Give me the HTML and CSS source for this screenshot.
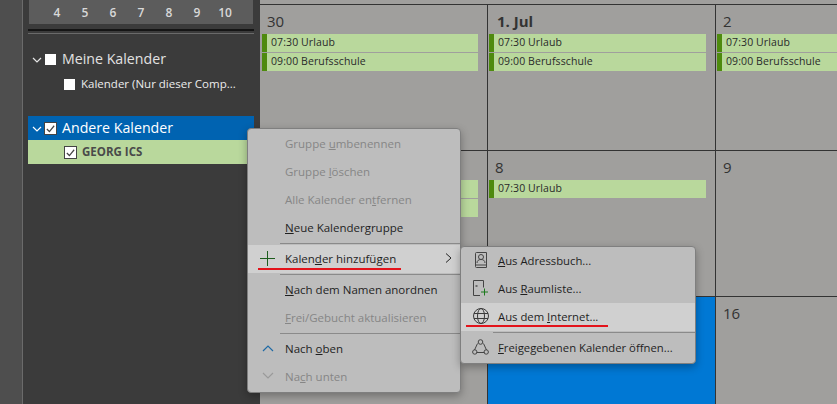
FILE: index.html
```html
<!DOCTYPE html>
<html lang="de">
<head>
<meta charset="utf-8">
<title>Kalender</title>
<link rel="stylesheet" href="styles.css">
</head>
<body>
<div class="app">
  <div class="strip"></div>
  <aside class="side">
    <div class="mini"><span>4</span><span>5</span><span>6</span><span>7</span><span>8</span><span>9</span><span>10</span></div>
    <div class="rule"></div>
    <div class="group group-mine">
      <svg class="chev" viewBox="0 0 10 6"><path d="M1 1l4 4 4-4" fill="none" stroke="#e6e6e6" stroke-width="1.2"/></svg>
      <span class="box"></span><span class="gname">Meine Kalender</span>
    </div>
    <div class="sub"><span class="box"></span><span class="sname">Kalender (Nur dieser Comp...</span></div>
    <div class="group group-other">
      <svg class="chev" viewBox="0 0 10 6"><path d="M1 1l4 4 4-4" fill="none" stroke="#fff" stroke-width="1.2"/></svg>
      <span class="box box-check"><svg viewBox="0 0 12 12"><path d="M2 6.500l2.800 2.800L10 3" fill="none" stroke="#444" stroke-width="1.300"/></svg></span><span class="gname">Andere Kalender</span>
    </div>
    <div class="sub sub-on"><span class="box box-check"><svg viewBox="0 0 12 12"><path d="M2 6.500l2.800 2.800L10 3" fill="none" stroke="#444" stroke-width="1.300"/></svg></span><span class="sname sname-on">GEORG ICS</span></div>
  </aside>
  <main class="cal">
    <div class="cell"><div class="day">30</div><div class="ev">07:30 Urlaub</div><div class="ev">09:00 Berufsschule</div></div>
    <div class="cell"><div class="day day-b">1. Jul</div><div class="ev">07:30 Urlaub</div><div class="ev">09:00 Berufsschule</div></div>
    <div class="cell"><div class="day">2</div><div class="ev ev-last">07:30 Urlaub</div><div class="ev ev-last">09:00 Berufsschule</div></div>
    <div class="cell"><div class="day"></div><div class="ev"></div><div class="ev"></div></div>
    <div class="cell"><div class="day">8</div><div class="ev">07:30 Urlaub</div></div>
    <div class="cell"><div class="day">9</div></div>
    <div class="cell"></div>
    <div class="cell cell-sel"></div>
    <div class="cell"><div class="day">16</div></div>
  </main>
</div>

<div class="menu menu-main">
  <div class="item off"><span class="ic"></span><span>Gruppe <u>u</u>mbenennen</span></div>
  <div class="item off"><span class="ic"></span><span>Gruppe <u>l</u>öschen</span></div>
  <div class="item off"><span class="ic"></span><span>Alle Kalender en<u>t</u>fernen</span></div>
  <div class="item"><span class="ic"></span><span><u>N</u>eue Kalendergruppe</span></div>
  <div class="sep"></div>
  <div class="item hot"><span class="ic"><svg width="15" height="15" viewBox="0 0 15 15"><path d="M0 7.500h15M7.500 0v15" stroke="#1d5c1d" stroke-width="1" fill="none"/></svg></span><span>Kalen<u>d</u>er hinzufügen</span><svg class="arrow" viewBox="0 0 7 10"><path d="M1 .5l5 4.500L1 9.500" fill="none" stroke="#222" stroke-width="1"/></svg></div>
  <div class="sep"></div>
  <div class="item"><span class="ic"></span><span><u>N</u>ach dem Namen anordnen</span></div>
  <div class="item off"><span class="ic"></span><span><u>F</u>rei/Gebucht aktualisieren</span></div>
  <div class="sep"></div>
  <div class="item"><span class="ic"><svg width="12" height="8" viewBox="0 0 12 8"><path d="M1 7l5-5 5 5" fill="none" stroke="#1f6aa5" stroke-width="1.200"/></svg></span><span>Nach <u>o</u>ben</span></div>
  <div class="item off"><span class="ic"><svg width="12" height="8" viewBox="0 0 12 8"><path d="M1 1l5 5 5-5" fill="none" stroke="#9a9a9a" stroke-width="1.200"/></svg></span><span>Na<u>c</u>h unten</span></div>
</div>

<div class="menu menu-sub">
  <div class="item"><span class="ic ic-sub"><svg width="14" height="16" viewBox="0 0 14 16"><path d="M2.500.5h10v15h-10a1 1 0 0 1-1-1v-13a1 1 0 0 1 1-1zM1.500 13h11" fill="none" stroke="#444"/><circle cx="7" cy="5" r="2.500" fill="none" stroke="#444"/><path d="M3 11c0-2.500 1.800-3.500 4-3.500s4 1 4 3.500" fill="none" stroke="#444"/></svg></span><span><u>A</u>us Adressbuch...</span></div>
  <div class="item"><span class="ic ic-sub"><svg width="17" height="16" viewBox="0 0 17 16"><path d="M8 15.500H1.500V.5h10v7" fill="none" stroke="#444"/><path d="M3.500 6h2" stroke="#333" stroke-width="1.200"/><path d="M9 12h7M12.500 8.500v7" stroke="#1d7a1d" stroke-width="1" fill="none"/></svg></span><span>Aus <u>R</u>aumliste...</span></div>
  <div class="item hot"><span class="ic ic-sub"><svg width="16" height="16" viewBox="0 0 16 16" fill="none" stroke="#3a3a3a"><circle cx="8" cy="8" r="7.500"/><ellipse cx="8" cy="8" rx="3.500" ry="7.500"/><path d="M1 5.500h14M1 10.500h14"/></svg></span><span>Aus dem <u>I</u>nternet...</span></div>
  <div class="sep sep-sub"></div>
  <div class="item"><span class="ic ic-sub"><svg width="17" height="16" viewBox="0 0 17 16" fill="none" stroke="#444"><path d="M5.500 4.500 2.500 11M11.500 4.500l3 6.500M4.500 13.500h8"/><circle cx="8.500" cy="3" r="2.300"/><circle cx="2.800" cy="13" r="2.200"/><circle cx="14.200" cy="13" r="2.200"/></svg></span><span><u>F</u>reigegebenen Kalender öffnen...</span></div>
</div>

<div class="mark mark-a"></div>
<div class="mark mark-b"></div>
</body>
</html>
```
FILE: styles.css
```css
* { box-sizing: border-box; }
html, body { margin: 0; height: 100%; overflow: hidden; }
body { font-family: "Open Sans", "Noto Sans", sans-serif; position: relative; background: #3b3b3b; }

.app { display: flex; width: 837px; height: 404px; }
.strip { width: 23px; flex: none; background: #4e4e4e; border-right: 1px solid #6b6b6b; }

.side { width: 237px; flex: none; background: #3b3b3b; padding: 0 6px 0 5px; }
.mini { height: 24px; margin: 0 1px; background: #5c5c5c; display: flex; padding-left: 14px; color: #d8d8d8; font-size: 12px; font-weight: 600; }
.mini span { width: 28px; text-align: center; line-height: 25px; }
.rule { height: 5px; margin-top: 5px; border-top: 2px solid #151515; border-bottom: 1px solid #6a6a6a; }

.group { height: 24px; display: flex; align-items: center; padding-left: 4px; font-size: 14.200px; color: #e2e2e2; }
.group-mine { margin-top: 13px; height: 25px; }
.group-other { margin-top: 20px; background: #0063b1; color: #fff; }
.gname { margin-bottom: 2px; }
.chev { width: 10px; height: 6px; margin: 1px 3px 0 0; flex: none; }
.box { width: 11px; height: 11px; background: #fff; flex: none; display: block; margin-right: 6px; }
.box-check { width: 13px; height: 13px; background: #fff; border: 1px solid #444; margin-right: 5px; }
.box-check svg { display: block; width: 11px; height: 11px; }
.group-other .box-check { margin-left: -1px; }
.sub { height: 24px; display: flex; align-items: center; padding-left: 36px; }
.sub-on { background: #b9d89c; }
.sname { font-size: 11.500px; color: #ececec; margin-bottom: 2px; }
.sname-on { font-weight: 700; color: #4a4a4a; font-size: 11.500px; }

.cal { flex: 1; min-width: 0; padding-top: 4px; background: #a09f9d; display: grid; grid-template-columns: 227px 228px 1fr; grid-template-rows: 146px 146px 108px; }
.cell { border-top: 1px solid #333; border-left: 1px solid #333; padding: 8px 0 0 1px; min-width: 0; overflow: hidden; }
.cal .cell:nth-child(3n+1) { border-left: 0; padding-left: 2px; }
.cell-sel { background: #0078d4; }
.day { height: 21px; line-height: 16px; padding-left: 6px; font-size: 15px; color: #333; }
.cal .cell:nth-child(3n+1) .day { padding-left: 5px; }
.day-b { font-weight: 700; padding-left: 8px; }
.ev { height: 18px; margin-bottom: 1px; margin-right: 9px; background: #b9d89c; border-left: 5px solid #4e8a0e; padding-left: 4px; font-size: 10.500px; line-height: 16px; color: #2a2a2a; white-space: nowrap; letter-spacing: .1px; }
.ev-last { margin-right: 0; }

.menu { position: absolute; background: #bdbdbd; border: 1px solid #7f7f7f; border-radius: 4px; box-shadow: 0 3px 9px rgba(0,0,0,.3); font-size: 11.500px; color: #1f1f1f; padding: 1px 0; }
.menu-main { left: 247px; top: 128px; width: 214px; height: 265px; }
.menu-sub { left: 460px; top: 246px; width: 236px; height: 118px; padding: 0; font-size: 11.300px; }
.item { position: relative; height: 28px; display: flex; align-items: center; white-space: pre; padding-bottom: 2px; }
.item.off { color: #868686; }
.item.hot { background: #d0d0d0; }
.ic { width: 37px; flex: none; display: flex; justify-content: center; padding: 0 6px 0 8px; }
.ic-sub { padding: 0 0 0 2px; }
.arrow { position: absolute; right: 8px; top: 8px; width: 7px; height: 10px; }
.sep { height: 3px; padding: 1px 0 1px 32px; }
.sep::before { content: ""; display: block; height: 1px; background: #8a8a8a; }

.mark { position: absolute; height: 2px; background: #e3131b; }
.mark-a { left: 258px; top: 268px; width: 143px; }
.mark-b { left: 466px; top: 325px; width: 142px; }
```
